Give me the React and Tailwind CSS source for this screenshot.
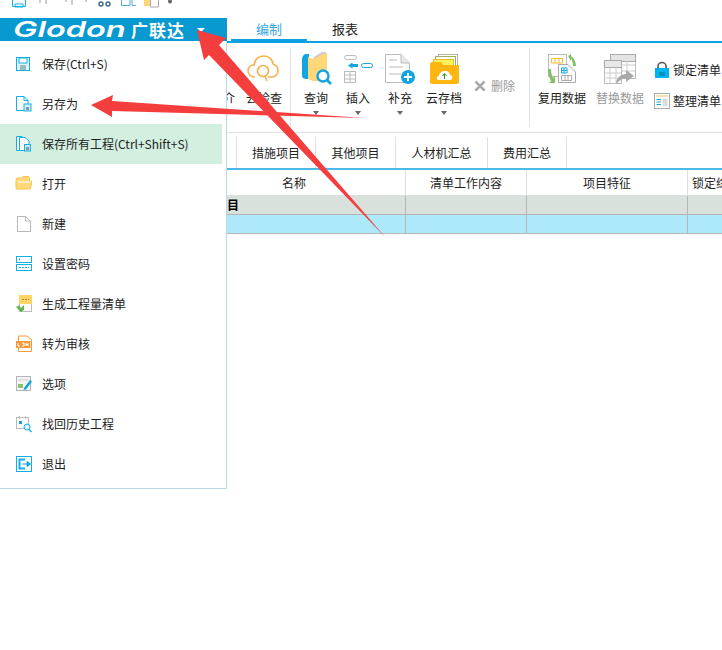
import React from 'react';

const FONT = 'font-["Microsoft_YaHei","Noto_Sans_CJK_SC",sans-serif]';

// menu icons, all drawn on a 18x18 box
const SaveIcon = () => (
  <svg width="18" height="18" viewBox="0 0 18 18" fill="none">
    <rect x="1.5" y="2.5" width="13" height="13" stroke="#12b0e6" fill="#dff4fb" />
    <rect x="4" y="3" width="8" height="5" fill="#fff" stroke="#12b0e6" />
    <rect x="5" y="10" width="6" height="5" fill="#9bb" />
  </svg>
);

const SaveAsIcon = () => (
  <svg width="18" height="18" viewBox="0 0 18 18" fill="none">
    <path d="M1.5 1.5H9L13 5.5V15.5H1.5Z" stroke="#12b0e6" fill="#fff" />
    <path d="M9 1.5V5.5H13" stroke="#12b0e6" />
    <rect x="9" y="9" width="7" height="7" fill="#d5eef7" stroke="#12b0e6" />
    <rect x="11" y="12" width="3" height="3" fill="#7d9aa5" />
  </svg>
);

const SaveAllIcon = () => (
  <svg width="18" height="18" viewBox="0 0 18 18" fill="none">
    <path d="M1.5 1.5H7V15.5H1.5Z" stroke="#12b0e6" fill="#fff" />
    <path d="M4.5 2.5H10L14 6V15.5H4.5Z" stroke="#12b0e6" fill="#fff" />
    <rect x="9.5" y="9.5" width="6" height="6.5" fill="#cde7ee" stroke="#12b0e6" />
    <rect x="11" y="12" width="3" height="3" fill="#7d9aa5" />
  </svg>
);

const OpenIcon = () => (
  <svg width="18" height="18" viewBox="0 0 18 18" fill="none">
    <path d="M1 4.5L2 3H7L8 1.5H13.5L14.5 3V6H16.5V9L15 14H1Z" fill="#ffd978" stroke="#fbc44a" />
    <path d="M3 7H16" stroke="#fff" />
  </svg>
);

const NewIcon = () => (
  <svg width="18" height="18" viewBox="0 0 18 18" fill="none">
    <path d="M2.5 1.5H10.5L15.5 6V16.5H2.5Z" stroke="#b8b8b8" fill="#fff" />
    <path d="M10.5 1.5V6H15.5" stroke="#b8b8b8" />
  </svg>
);

const PasswordIcon = () => (
  <svg width="18" height="18" viewBox="0 0 18 18" fill="none">
    <rect x="1.5" y="1.5" width="15" height="6" stroke="#12b0e6" />
    <rect x="1.5" y="9.5" width="15" height="6" stroke="#12b0e6" />
    <path d="M4.5 3.5V5.5" stroke="#12b0e6" />
    <path d="M4 12.5H14" stroke="#12b0e6" strokeDasharray="2 1" />
  </svg>
);

const GenerateIcon = () => (
  <svg width="18" height="18" viewBox="0 0 18 18" fill="none">
    <rect x="4.5" y="0.5" width="12" height="16" stroke="#bbb" fill="#fff" />
    <rect x="4" y="0" width="13" height="9" fill="#ffd467" />
    <path d="M7 4.5H14" stroke="#a98a3a" strokeDasharray="2 1" />
    <path d="M1 12L4 10.5L6 13L9 10V15L6 17Z" fill="#62b64a" />
  </svg>
);

const AuditIcon = () => (
  <svg width="18" height="18" viewBox="0 0 18 18" fill="none">
    <path d="M3.5 1H12L16.5 4.5V16.5H3.5Z" stroke="#f29a3c" fill="#fff" />
    <rect x="1" y="6" width="14.5" height="7" fill="#f29a3c" />
    <path d="M3 8V11H5M7 8H9V11H7M11 8V11M13 8V11M11 9.5H13" stroke="#fff" />
  </svg>
);

const OptionsIcon = () => (
  <svg width="18" height="18" viewBox="0 0 18 18" fill="none">
    <rect x="1.5" y="1.5" width="14" height="14" stroke="#b5b5b5" fill="#f3f3f3" />
    <path d="M3 5H13" stroke="#ccc" />
    <rect x="3" y="9" width="5" height="4" fill="#8cc26a" />
    <path d="M9 13L15 5L17 6.5L11 14.5L8.5 15Z" fill="#12a5e0" />
  </svg>
);

const HistoryIcon = () => (
  <svg width="18" height="18" viewBox="0 0 18 18" fill="none">
    <rect x="1.5" y="2.5" width="12" height="11" stroke="#bbb" fill="#fff" />
    <path d="M4.5 1V4M10.5 1V4" stroke="#bbb" />
    <rect x="4" y="6" width="3" height="3" fill="#12a5e0" />
    <circle cx="12" cy="12" r="3" stroke="#12b0e6" fill="#dff4fb" />
    <path d="M14 14.5L16.5 17" stroke="#12b0e6" strokeWidth="1.4" />
  </svg>
);

const ExitIcon = () => (
  <svg width="18" height="18" viewBox="0 0 18 18" fill="none">
    <rect x="1.5" y="1.5" width="15" height="15" stroke="#12b0e6" fill="#fff" />
    <path d="M10 4.5H4.5V13.5H10" stroke="#12b0e6" strokeWidth="2" />
    <path d="M7 9H12V6.5L15.5 9L12 11.5V9" stroke="#12a5e0" fill="#12a5e0" />
  </svg>
);

const menuItems = [
  { label: '保存(Ctrl+S)', icon: <SaveIcon /> },
  { label: '另存为', icon: <SaveAsIcon /> },
  { label: '保存所有工程(Ctrl+Shift+S)', icon: <SaveAllIcon />, active: true },
  { label: '打开', icon: <OpenIcon /> },
  { label: '新建', icon: <NewIcon /> },
  { label: '设置密码', icon: <PasswordIcon /> },
  { label: '生成工程量清单', icon: <GenerateIcon /> },
  { label: '转为审核', icon: <AuditIcon /> },
  { label: '选项', icon: <OptionsIcon /> },
  { label: '找回历史工程', icon: <HistoryIcon /> },
  { label: '退出', icon: <ExitIcon /> },
];

const sheetTabs = [
  { label: '措施项目', w: 'w-[79px]' },
  { label: '其他项目', w: 'w-[80px]' },
  { label: '人材机汇总', w: 'w-[92px]' },
  { label: '费用汇总', w: 'w-[80px]' },
];

const Caret = () => <div className="h-0 w-0 border-x-[3.5px] border-t-[4px] border-x-transparent border-t-[#666]" />;

const RibbonButton = ({ label, w, caret, muted, children }) => (
  <div className={`flex shrink-0 flex-col items-center pt-[2px] ${w}`}>
    <div className="flex h-[38px] items-center justify-center">{children}</div>
    <div className={`mt-[2px] h-[16px] whitespace-nowrap text-[12px] leading-[16px] ${muted ? 'text-[#999]' : 'text-[#222]'}`}>{label}</div>
    {caret && <div className="mt-[5px]"><Caret /></div>}
  </div>
);

const RibbonDivider = () => <div className="h-[79px] w-px shrink-0 bg-[#dde3e6]" />;

const CloudIcon = () => (
  <svg width="32" height="30" viewBox="0 0 32 30" fill="none">
    <path d="M8 23C3 23 1 19.5 1 16.5C1 13 4 10.5 7 11C8 5 12 2 17 2C22 2 25.5 5.5 26 10C29 11 31 13.5 31 16.5C31 20 28.5 23 25 23H21" stroke="#f9b04d" strokeWidth="1.6" />
    <circle cx="16" cy="17" r="5.5" stroke="#f9b04d" strokeWidth="1.6" />
    <path d="M18 22L20 27" stroke="#f9b04d" strokeWidth="1.6" />
  </svg>
);

const QueryIcon = () => (
  <svg width="32" height="34" viewBox="0 0 32 34" fill="none">
    <path d="M2 7C2 4 4 2 6 2H9V27H6C4 27 2 26 2 24Z" fill="#12a5e0" />
    <path d="M8 5L13 7V29L8 27Z" fill="#ffd678" />
    <path d="M13 7L22 1H27V29H13Z" fill="#ffd678" />
    <path d="M14 6L22 1H26" stroke="#ccc" strokeWidth="2" />
    <circle cx="23" cy="24" r="5.5" fill="#fff" stroke="#12a5e0" strokeWidth="2.4" />
    <path d="M27 28L31 32" stroke="#12a5e0" strokeWidth="2.6" />
  </svg>
);

const InsertIcon = () => (
  <svg width="30" height="30" viewBox="0 0 30 30" fill="none">
    <rect x="1.5" y="1.5" width="12" height="4" rx="2" stroke="#bbb" />
    <rect x="18.5" y="9.5" width="11" height="4" rx="2" stroke="#12a5e0" />
    <path d="M5 11.5L9.5 8.5V10H15V13H9.5V14.5Z" fill="#12a5e0" />
    <rect x="1.5" y="17.5" width="11" height="11" stroke="#bbb" />
    <path d="M1.5 21H12.5M1.5 25H12.5M7 17.5V28.5" stroke="#bbb" />
  </svg>
);

const AddIcon = () => (
  <svg width="32" height="32" viewBox="0 0 32 32" fill="none">
    <path d="M1.5 1.5H17L25.5 10V29.5H1.5Z" stroke="#bbb" fill="#fff" />
    <path d="M17 1.5V10H25.5" stroke="#bbb" fill="#e8e8e8" />
    <path d="M5 7H13M5 14H19M5 21H17" stroke="#ddd" strokeWidth="2" />
    <circle cx="24" cy="24" r="7" fill="#12a5e0" />
    <path d="M20 24H28M24 20V28" stroke="#fff" strokeWidth="2" />
  </svg>
);

const CloudSaveIcon = () => (
  <svg width="31" height="32" viewBox="0 0 31 32" fill="none">
    <rect x="9.5" y="1.5" width="19" height="14" stroke="#b7b7a0" fill="#fff" />
    <rect x="6.5" y="3.5" width="20" height="12" stroke="#9cb35c" fill="#fff" />
    <rect x="4.5" y="6.5" width="20" height="10" stroke="#e5c22b" fill="#fff15c" />
    <path d="M1 11C1 10 2 9 3 9H12L14 12H30V29C30 30 29 31 28 31H3C2 31 1 30 1 29Z" fill="#ffb612" />
    <path d="M10 27C7 27 7 23 10 23C10 19 14 18 16 18C19 18 21 20 21 22C24 22 24 27 21 27Z" fill="#fff" />
    <path d="M15.5 26V21M13.5 23L15.5 20.5L17.5 23" stroke="#2a9d2a" />
  </svg>
);

const ReuseIcon = () => (
  <svg width="30" height="32" viewBox="0 0 30 32" fill="none">
    <rect x="1.5" y="1.5" width="18" height="22" stroke="#bbb" fill="#fff" />
    <path d="M4.5 5.5H15.5V10H4.5ZM8 5.5V10M12 5.5V10" stroke="#fbbc2c" />
    <path d="M21 3L24 1V3C27 5 29 9 29 13H26C26 10 25 7 24 6V8Z" fill="#84bf6a" />
    <path d="M1 16H4C4 20 5 23 6 25L8 23V30H2L4 28C2 24 1 20 1 16Z" fill="#84bf6a" />
    <path d="M11.5 11.5H21L28.5 19V29.5H11.5Z" stroke="#aaa" fill="#fff" />
    <path d="M14.5 15H20V20H14.5ZM17 15V20M14.5 17.5H20" stroke="#12a5e0" />
    <path d="M14.5 22.5H24.5V27.5H14.5ZM18 22.5V27.5M21 22.5V27.5" stroke="#aaa" />
  </svg>
);

const ReplaceIcon = () => (
  <svg width="34" height="32" viewBox="0 0 34 32" fill="none">
    <rect x="7.5" y="1.5" width="25" height="24" stroke="#bbb" fill="#fff" />
    <rect x="7.5" y="1.5" width="25" height="7" fill="#e4e4e4" stroke="#aaa" />
    <rect x="1.5" y="7.5" width="17" height="23" stroke="#bbb" fill="#fff" />
    <rect x="1.5" y="7.5" width="17" height="7" fill="#e8e8e8" stroke="#aaa" />
    <path d="M1.5 20H18M1.5 25H18M7 14.5V30.5M13 14.5V30.5M18 12H32M18 18H32M24 8.5V25" stroke="#ccc" />
    <path d="M13 31C13 25 18 21 23 21V17L31 23L23 29V25C20 25 17 27 13 31Z" fill="#a9a9a9" />
  </svg>
);

const LockIcon = () => (
  <svg width="16" height="18" viewBox="0 0 16 18" fill="none">
    <path d="M4 8V5C4 3 6 1.5 8 1.5C10 1.5 12 3 12 5V8" stroke="#555" strokeWidth="1.6" />
    <rect x="1" y="7" width="14" height="10" fill="#00b4f0" />
    <path d="M5 12H11M5 14H11" stroke="#0a6f94" />
  </svg>
);

const TidyIcon = () => (
  <svg width="16" height="16" viewBox="0 0 16 16" fill="none">
    <rect x="0.5" y="0.5" width="15" height="15" stroke="#aaa" fill="#fff" />
    <rect x="2" y="2" width="12" height="2" fill="#f6e2ae" />
    <path d="M2.5 6.5H7M2.5 9H7M2.5 11.5H7" stroke="#12a5e0" />
    <rect x="8.5" y="5.5" width="5" height="8" fill="#ddd" />
  </svg>
);

const QuickBar = () => (
  <div className="flex h-[18px] items-start overflow-hidden">
    <svg width="180" height="8" viewBox="0 0 180 8" fill="none">
      <path d="M12.5 0V6.5H25.5V0M15 4H23V7H15Z" stroke="#12b0e6" />
      <path d="M40 0V3M46 0V4M66 0V2M72 0V5M86 0V2" stroke="#ccc" strokeWidth="2" />
      <circle cx="101" cy="4" r="2" stroke="#3c6a8c" strokeWidth="1.4" />
      <circle cx="108" cy="4" r="2" stroke="#3c6a8c" strokeWidth="1.4" />
      <path d="M121.5 0V5.5H130V0M132 0V5.5H136" stroke="#5aa9d6" />
      <rect x="144" y="0" width="6" height="6" fill="#ffd978" />
      <path d="M150.5 0V7H158.5V0" stroke="#aaa" />
      <circle cx="170" cy="1.5" r="2" fill="#666" />
    </svg>
  </div>
);

const FileMenu = () => (
  <div className="flex h-[471px] w-[227px] shrink-0 flex-col">
    <div className="flex h-[23px] items-center bg-[#0899d0] pl-[13px] text-white">
      <span className="inline-block w-[118px] origin-left scale-x-[1.55] font-['Inter',sans-serif] text-[21px] leading-[23px] font-semibold italic">Glodon</span>
      <span className="text-[17px] leading-[23px] font-bold tracking-[1px]">广联达</span>
      <div className="ml-[12px] h-0 w-0 border-x-[4px] border-t-[4px] border-x-transparent border-t-white" />
    </div>
    <div className="flex flex-1 flex-col border-r border-b border-[#b5dbe8] pt-[3px]">
      {menuItems.map((item) => (
        <div
          key={item.label}
          className={`flex h-[40px] w-[222px] shrink-0 items-center pl-[15px] text-[12px] text-[#222] ${item.active ? 'bg-[#d3efe0]' : ''}`}
        >
          <div className="w-[27px] shrink-0">{item.icon}</div>
          <span className="whitespace-nowrap">{item.label}</span>
        </div>
      ))}
    </div>
  </div>
);

const Ribbon = () => (
  <div className="flex h-[90px] items-start overflow-hidden border-b border-[#e0e0e0] pt-[5px]">
    <div className="flex h-[79px] w-[63px] shrink-0 flex-col items-center pl-[9px]">
      <div className="mt-[2px] flex h-[38px] items-center justify-center"><CloudIcon /></div>
      <div className="mt-[2px] -ml-[52px] w-[90px] text-right text-[12px] leading-[16px] whitespace-nowrap text-[#222]">
        介<span className="ml-[11px]">去检查</span>
      </div>
    </div>
    <RibbonDivider />
    <RibbonButton label="查询" w="w-[50px]" caret><QueryIcon /></RibbonButton>
    <RibbonButton label="插入" w="w-[34px]" caret><InsertIcon /></RibbonButton>
    <RibbonButton label="补充" w="w-[50px]" caret><AddIcon /></RibbonButton>
    <RibbonButton label="云存档" w="w-[38px]" caret><CloudSaveIcon /></RibbonButton>
    <div className="ml-[11px] flex h-[76px] w-[55px] shrink-0 items-center gap-[5px] text-[12px] text-[#999]">
      <svg width="12" height="12" viewBox="0 0 12 12" fill="none">
        <path d="M1.5 1.5L10.5 10.5M10.5 1.5L1.5 10.5" stroke="#aaa" strokeWidth="2.6" />
      </svg>
      <span>删除</span>
    </div>
    <RibbonDivider />
    <RibbonButton label="复用数据" w="w-[64px]"><ReuseIcon /></RibbonButton>
    <RibbonButton label="替换数据" w="w-[52px]" muted><ReplaceIcon /></RibbonButton>
    <div className="ml-[8px] flex shrink-0 flex-col gap-[14px] pt-[13px] text-[12px] leading-[16px] text-[#222]">
      <div className="flex items-center gap-[3px] whitespace-nowrap"><LockIcon />锁定清单</div>
      <div className="flex items-center gap-[3px] whitespace-nowrap"><TidyIcon />整理清单</div>
    </div>
  </div>
);

const GridRow = ({ className, cells }) => (
  <div className={`flex ${className}`}>
    <div className="flex w-[179px] shrink-0 items-center border-r border-[#b5b5b5]">{cells?.[0]}</div>
    <div className="w-[121px] shrink-0 border-r border-[#b5b5b5]" />
    <div className="w-[161px] shrink-0 border-r border-[#b5b5b5]" />
    <div className="flex-1" />
  </div>
);

const Workspace = () => (
  <div className="flex min-w-0 flex-1 flex-col overflow-hidden">
    {/* tabs */}
    <div className="flex h-[25px] border-b-2 border-[#0aa2e2] pl-[4px] text-[13px]">
      <div className="flex h-[23px] w-[76px] items-center justify-center border-b-2 border-[#0aa2e2] text-[#35a7df]">编制</div>
      <div className="flex h-[23px] w-[76px] items-center justify-center pb-[2px] text-[#222]">报表</div>
    </div>
    <Ribbon />
    {/* sheet tabs */}
    <div className="flex h-[37px] items-end border-b-2 border-[#4cb8e6] pl-[9px] text-[12px] text-[#222]">
      {sheetTabs.map((tab) => (
        <div key={tab.label} className={`flex h-[31px] items-center justify-center border-l border-[#e0e0e0] last:border-r ${tab.w}`}>
          {tab.label}
        </div>
      ))}
    </div>
    {/* table */}
    <div className="flex h-[26px] border-b border-[#dedede] text-[12px] text-[#222]">
      <div className="flex w-[179px] shrink-0 items-center justify-center border-r border-[#dedede] pr-[44px]">名称</div>
      <div className="flex w-[121px] shrink-0 items-center justify-center border-r border-[#dedede]">清单工作内容</div>
      <div className="flex w-[161px] shrink-0 items-center justify-center border-r border-[#dedede]">项目特征</div>
      <div className="flex flex-1 items-center overflow-hidden pl-[4px] whitespace-nowrap">锁定综合单价</div>
    </div>
    <GridRow
      className="h-[19px] border-b border-[#b5b5b5] bg-[#d9e1dc]"
      cells={[<span key="name" className="text-[12px] leading-[18px] font-bold text-black">目</span>]}
    />
    <GridRow className="h-[19px] border-b border-[#b5b5b5] bg-[#ade8fb]" />
  </div>
);

export default function App() {
  return (
    <div className={`relative h-[650px] w-[722px] overflow-hidden bg-white ${FONT}`}>
      <QuickBar />
      <div className="flex items-start">
        <FileMenu />
        <Workspace />
      </div>
      {/* annotation arrows on top of the screenshot */}
      <svg className="pointer-events-none absolute top-0 left-0" width="722" height="650" viewBox="0 0 722 650">
        <path d="M197 30L226 38L219 45L386 238L209 55L204 60Z" fill="#f43d3d" />
        <path d="M91 105L113 95L112 101L365 118L112 111L112 117Z" fill="#f43d3d" />
      </svg>
    </div>
  );
}
